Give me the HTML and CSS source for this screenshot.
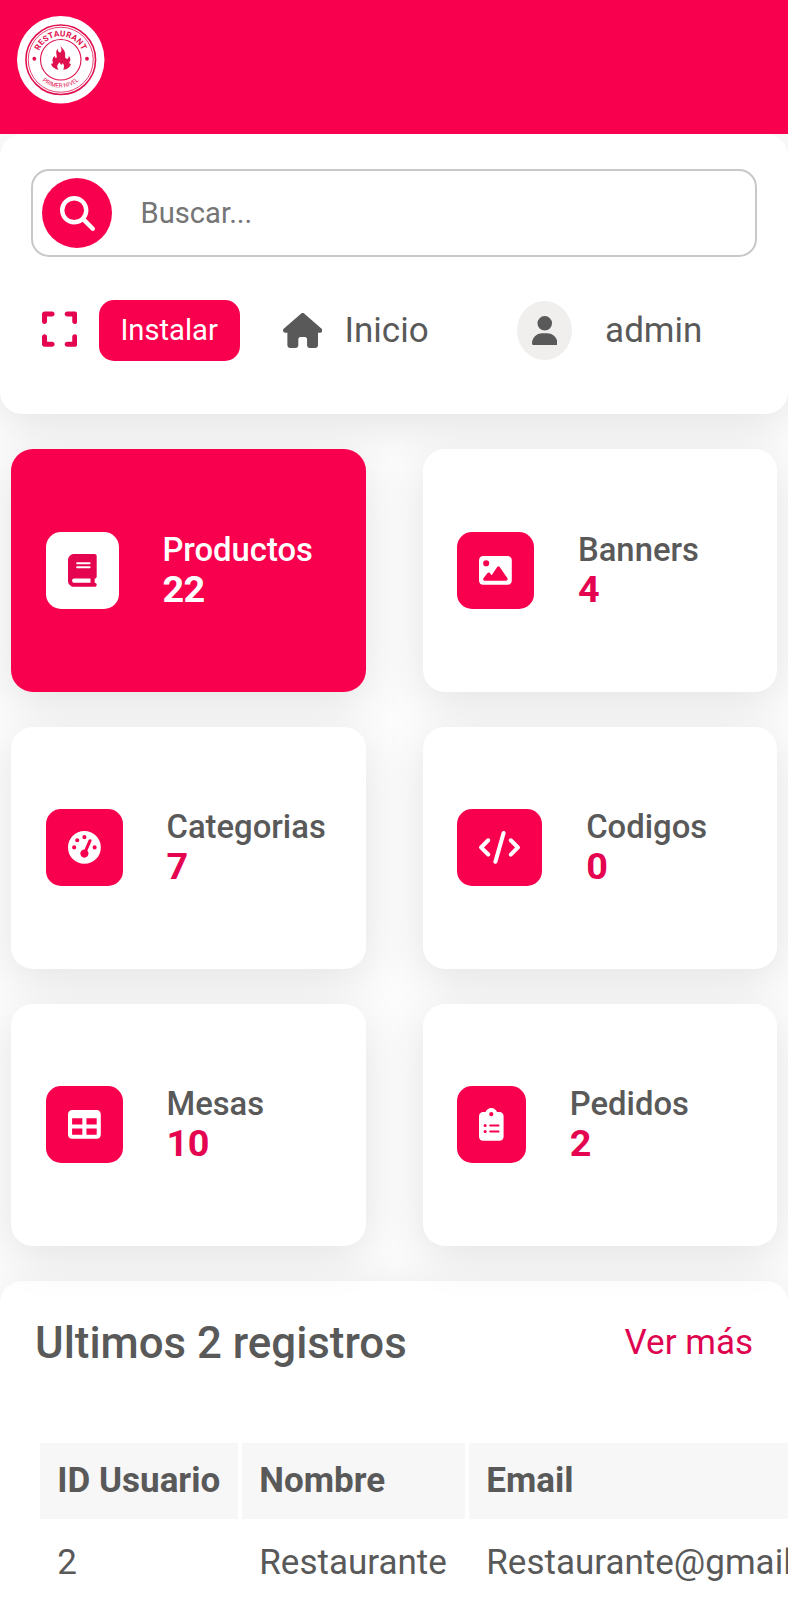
FILE: index.html
```html
<!DOCTYPE html>
<html lang="es">
<head>
<meta charset="utf-8">
<title>Restaurant</title>
<link rel="stylesheet" href="styles.css">
</head>
<body>
<header class="header">
  <svg class="logo" viewBox="0 0 88 88">
    <defs>
      <path id="arc-top" d="M20.5 44a23.5 23.5 0 0 1 47 0"/>
      <path id="arc-bottom" d="M16 44a28 28 0 0 0 56 0"/>
    </defs>
    <circle cx="44" cy="44" r="44" fill="#fff"/>
    <g fill="none" stroke="#e0104f">
      <circle cx="44" cy="44" r="35" stroke-width="1.6"/>
      <circle cx="44" cy="44" r="32.700" stroke-width=".8"/>
      <circle cx="44" cy="44" r="20.3" stroke-width="1.1"/>
    </g>
    <g fill="#e0104f">
      <circle cx="17.4" cy="43" r="1.9"/>
      <circle cx="70.4" cy="43" r="1.9"/>
      <path d="M43.500 30.500c3.600 3 5.600 6 4.900 9.600c-.3 1.600.4 2.900 1.600 3c1.700 0 2.200-1.600 1.900-3.200c2.500 2.600 1.900 4.700.8 6.700c-.5 1.300.6 1.900 1.500 1.300c0 2.800-3.600 5.800-7.800 6.100c1.400-2.200 1.200-5-.5-6.700c-.4 2.700-2.900 1.900-2.600-.8c-3 2-3.800 5.100-1.300 7.600c-4.100-.5-7.400-3.300-7.800-6.300c1.400.7 2.400-.2 1.800-1.700c-.9-2.100-.1-4.100 1.900-6c0 2.200 2 2.900 2.100.9c0-2.800-1.600-4.800.8-8.100c.2 2.800 2 4.800 3.300 3.300c1-1.300.9-3.200-.6-5.700z"/>
      <text class="logo-top"><textPath href="#arc-top" startOffset="50%" text-anchor="middle">RESTAURANT</textPath></text>
      <text class="logo-bottom"><textPath href="#arc-bottom" startOffset="50%" text-anchor="middle">PRIMER NIVEL</textPath></text>
    </g>
  </svg>
</header>

<section class="topbar">
  <div class="search">
    <span class="search-btn"><svg width="35" height="35" viewBox="0 0 512 512"><path d="M416 208c0 45.900-14.900 88.300-40 122.700L502.600 457.400c12.500 12.500 12.500 32.800 0 45.300s-32.800 12.500-45.300 0L330.700 376c-34.400 25.200-76.800 40-122.700 40C93.100 416 0 322.900 0 208S93.100 0 208 0S416 93.100 416 208zM208 352a144 144 0 1 0 0-288 144 144 0 1 0 0 288z"/></svg></span>
    <input class="search-input" type="text" placeholder="Buscar...">
  </div>
  <nav class="nav">
    <svg class="expand" viewBox="0 0 448 512"><path d="M32 32C14.300 32 0 46.300 0 64v96c0 17.700 14.300 32 32 32s32-14.300 32-32V96h64c17.700 0 32-14.300 32-32s-14.300-32-32-32H32zM64 352c0-17.700-14.300-32-32-32s-32 14.300-32 32v96c0 17.700 14.300 32 32 32h96c17.700 0 32-14.300 32-32s-14.300-32-32-32H64V352zM320 32c-17.700 0-32 14.300-32 32s14.300 32 32 32h64v64c0 17.700 14.300 32 32 32s32-14.300 32-32V64c0-17.700-14.300-32-32-32H320zM448 352c0-17.700-14.300-32-32-32s-32 14.300-32 32v64H320c-17.700 0-32 14.300-32 32s14.300 32 32 32h96c17.700 0 32-14.300 32-32V352z"/></svg>
    <button class="install">Instalar</button>
    <a class="home"><svg width="39.4" height="35" viewBox="0 0 576 512"><path d="M575.8 255.500c0 18-15 32.100-32 32.100h-32l.7 160.200c0 2.700-.2 5.400-.5 8.100V472c0 22.100-17.900 40-40 40H456c-1.100 0-2.200 0-3.300-.1c-1.400 .1-2.800 .1-4.200 .1H416 392c-22.100 0-40-17.900-40-40V448 384c0-17.700-14.300-32-32-32H256c-17.700 0-32 14.300-32 32v64 24c0 22.100-17.900 40-40 40H160 128.100c-1.500 0-3-.1-4.500-.2c-1.200 .1-2.400 .2-3.600 .2H104c-22.100 0-40-17.900-40-40V360c0-.9 0-1.900 .1-2.800V287.600H32c-18 0-32-14-32-32.100c0-9 3-17 10-24L266.400 8c7-7 15-8 22-8s15 2 21 7L564.800 231.500c8 7 12 15 11 24z"/></svg><span>Inicio</span></a>
    <span class="avatar"><svg width="25.500" height="29.200" viewBox="0 0 448 512"><path d="M224 256A128 128 0 1 0 224 0a128 128 0 1 0 0 256zm-45.700 48C79.800 304 0 383.800 0 482.300C0 498.700 13.300 512 29.700 512H418.300c16.400 0 29.700-13.300 29.700-29.700C448 383.800 368.200 304 269.700 304H178.300z"/></svg></span>
    <span class="user">admin</span>
  </nav>
</section>

<main class="cards">
  <article class="card card-active">
    <span class="card-icon"><svg width="28.700" height="32.800" viewBox="0 0 448 512"><path d="M96 0C43 0 0 43 0 96V416c0 53 43 96 96 96H384h32c17.700 0 32-14.300 32-32s-14.300-32-32-32V384c17.700 0 32-14.300 32-32V32c0-17.700-14.300-32-32-32H384 96zm0 384H352v64H96c-17.700 0-32-14.300-32-32s14.300-32 32-32zm32-240c0-8.800 7.200-16 16-16H336c8.800 0 16 7.200 16 16s-7.200 16-16 16H144c-8.800 0-16-7.200-16-16zm16 48H336c8.800 0 16 7.200 16 16s-7.200 16-16 16H144c-8.800 0-16-7.200-16-16s7.200-16 16-16z"/></svg></span>
    <div><h3 class="card-name">Productos</h3><p class="card-num">22</p></div>
  </article>
  <article class="card">
    <span class="card-icon"><svg width="32.800" height="32.800" viewBox="0 0 512 512"><path d="M0 96C0 60.700 28.700 32 64 32H448c35.300 0 64 28.700 64 64V416c0 35.300-28.700 64-64 64H64c-35.300 0-64-28.700-64-64V96zM323.800 202.500c-4.500-6.600-11.900-10.500-19.800-10.500s-15.400 3.900-19.800 10.500l-87 127.600L170.700 297c-4.600-5.700-11.500-9-18.700-9s-14.200 3.300-18.700 9l-64 80c-5.800 7.200-6.900 17.100-2.900 25.400s12.400 13.600 21.600 13.600h96 32H424c8.900 0 17.100-4.900 21.200-12.800s3.600-17.400-1.400-24.700l-120-176zM112 192a48 48 0 1 0 0-96 48 48 0 1 0 0 96z"/></svg></span>
    <div><h3 class="card-name">Banners</h3><p class="card-num">4</p></div>
  </article>
  <article class="card">
    <span class="card-icon"><svg width="32.800" height="32.800" viewBox="0 0 512 512"><path d="M0 256a256 256 0 1 1 512 0A256 256 0 1 1 0 256zM288 96a32 32 0 1 0 -64 0 32 32 0 1 0 64 0zM256 416c35.300 0 64-28.700 64-64c0-17.400-6.900-33.100-18.100-44.600L366 161.700c5.300-12.100-.2-26.300-12.300-31.600s-26.300 .2-31.600 12.300L257.900 288c-.6 0-1.300 0-1.900 0c-35.300 0-64 28.700-64 64s28.700 64 64 64zM176 144a32 32 0 1 0 -64 0 32 32 0 1 0 64 0zM96 288a32 32 0 1 0 0-64 32 32 0 1 0 0 64zm352-32a32 32 0 1 0 -64 0 32 32 0 1 0 64 0z"/></svg></span>
    <div><h3 class="card-name">Categorias</h3><p class="card-num">7</p></div>
  </article>
  <article class="card">
    <span class="card-icon"><svg width="41" height="32.800" viewBox="0 0 640 512"><path d="M392.800 1.200c-17-4.900-34.700 5-39.600 22l-128 448c-4.900 17 5 34.700 22 39.600s34.700-5 39.600-22l128-448c4.900-17-5-34.700-22-39.600zm80.600 120.100c-12.500 12.500-12.500 32.800 0 45.300L562.700 256l-89.400 89.400c-12.500 12.500-12.500 32.800 0 45.300s32.800 12.500 45.300 0l112-112c12.500-12.500 12.500-32.800 0-45.300l-112-112c-12.500-12.500-32.800-12.500-45.300 0zm-306.700 0c-12.500-12.500-32.800-12.500-45.300 0l-112 112c-12.500 12.500-12.500 32.800 0 45.300l112 112c12.500 12.500 32.800 12.500 45.300 0s12.500-32.800 0-45.300L77.300 256l89.400-89.400c12.500-12.500 12.500-32.800 0-45.300z"/></svg></span>
    <div><h3 class="card-name">Codigos</h3><p class="card-num">0</p></div>
  </article>
  <article class="card">
    <span class="card-icon"><svg width="32.800" height="32.800" viewBox="0 0 512 512"><path d="M64 256V160H224v96H64zm0 64H224v96H64V320zm224 96V320H448v96H288zM448 256H288V160H448v96zM64 32C28.700 32 0 60.700 0 96V416c0 35.300 28.700 64 64 64H448c35.300 0 64-28.700 64-64V96c0-35.300-28.700-64-64-64H64z" fill-rule="evenodd"/></svg></span>
    <div><h3 class="card-name">Mesas</h3><p class="card-num">10</p></div>
  </article>
  <article class="card">
    <span class="card-icon"><svg width="24.600" height="32.800" viewBox="0 0 384 512"><path fill-rule="evenodd" d="M192 0c-41.800 0-77.400 26.700-90.500 64H64C28.700 64 0 92.700 0 128V448c0 35.300 28.700 64 64 64H320c35.300 0 64-28.700 64-64V128c0-35.300-28.700-64-64-64H282.500C269.400 26.700 233.800 0 192 0zm0 64a32 32 0 1 1 0 64 32 32 0 1 1 0-64zM72 272a24 24 0 1 1 48 0 24 24 0 1 1 -48 0zm104-16H304c8.800 0 16 7.200 16 16s-7.200 16-16 16H176c-8.800 0-16-7.200-16-16s7.200-16 16-16zM72 368a24 24 0 1 1 48 0 24 24 0 1 1 -48 0zm88 0c0-8.800 7.200-16 16-16H304c8.800 0 16 7.200 16 16s-7.200 16-16 16H176c-8.800 0-16-7.200-16-16z"/></svg></span>
    <div><h3 class="card-name">Pedidos</h3><p class="card-num">2</p></div>
  </article>
</main>

<section class="records">
  <div class="records-head">
    <h2 class="records-title">Ultimos 2 registros</h2>
    <a class="more">Ver más</a>
  </div>
  <table class="table">
    <thead><tr><th class="col-id">ID Usuario</th><th class="col-name">Nombre</th><th class="col-mail">Email</th></tr></thead>
    <tbody><tr><td>2</td><td>Restaurante</td><td>Restaurante@gmail.com</td></tr></tbody>
  </table>
</section>
</body>
</html>
```
FILE: styles.css
```css
* { box-sizing: border-box; margin: 0; padding: 0; }

html, body { height: 1600px; overflow: hidden; }

body {
  background: #fcfcfc;
  color: #595959;
  font-family: Roboto, "Liberation Sans", sans-serif;
  font-size: 35px;
}

svg { display: block; flex: none; fill: currentColor; }

.header { height: 134.4px; padding: 16px 17px; background: #f9004e; }
.logo { width: 87.5px; height: 87.5px; }
.logo-top { font-size: 8.2px; font-weight: 700; letter-spacing: .3px; }
.logo-bottom { font-size: 6px; letter-spacing: .1px; }

.topbar,
.card,
.records {
  border-radius: 22px;
  background: #fff;
  box-shadow: 0 11px 46px rgba(0, 0, 0, .1);
}

/* keeps the panel's shadow off the header */
.header { position: relative; z-index: 1; }

.topbar { height: 280.1px; padding: 34.8px 31.5px 0 31px; }

.search {
  display: flex;
  align-items: center;
  height: 88px;
  padding-left: 9px;
  border: 2px solid #c8c8c8;
  border-radius: 18px;
}
.search-btn {
  display: grid;
  place-items: center;
  flex: none;
  width: 70px;
  height: 70px;
  border-radius: 50%;
  background: #f9004e;
  color: #fff;
}
.search-input {
  flex: 1;
  min-width: 0;
  margin-left: 28.5px;
  border: 0;
  outline: 0;
  background: none;
  font: 400 29.2px Roboto, sans-serif;
}
.search-input::placeholder { color: #757575; }

.nav { display: flex; align-items: center; height: 61px; margin: 42.5px 0 0 11px; }
.expand { width: 35.3px; height: 40.3px; margin-top: -2px; color: #e4044f; }
.install {
  height: 61px;
  width: 141px;
  margin-left: 21.3px;
  border: 0;
  border-radius: 15px;
  background: #f9004e;
  color: #fff;
  font: 400 29.2px Roboto, sans-serif;
}
.home { display: flex; align-items: center; gap: 22px; width: 234px; margin-left: 43.5px; }
.avatar {
  display: grid;
  place-items: center;
  width: 55px;
  height: 59px;
  border-radius: 50%;
  background: #f1eeee;
}
.user { margin-left: 33px; }

.cards {
  display: grid;
  grid-template-columns: 1fr 1fr;
  grid-auto-rows: 242.3px;
  gap: 34.8px 57px;
  padding: 35px 11px 35px;
}
.card { display: flex; align-items: center; gap: 43.8px; padding: 0 34.9px; }
.card > div { margin-top: -1px; }
.card-icon {
  display: grid;
  padding: 22px;
  border-radius: 15px;
  background: #f9004e;
  color: #fff;
}
.card-name { font-size: 32.8px; font-weight: 500; line-height: 38px; }
.card-num { color: #e4044f; font-size: 37.8px; font-weight: 700; line-height: 41px; letter-spacing: -.5px; }
.card-active { background: #f9004e; color: #fff; }
.card-active .card-icon { background: #fff; color: #e4044f; }
.card-active .card-num { color: #fff; }

.records { height: 400px; padding: 36px 35px 0; overflow: hidden; }
.records-head { display: flex; align-items: center; justify-content: space-between; height: 52px; }
.records-title { font-size: 43.8px; font-weight: 500; }
.more { color: #de044f; }

.table {
  width: 900px;
  margin: 70px 0 0 .8px;
  border-collapse: separate;
  border-spacing: 4.4px;
  table-layout: fixed;
}
.table th, .table td { padding: 17.5px; text-align: left; line-height: 41.5px; white-space: nowrap; }
.table td { padding-top: 18.2px; }
.table th { background: #f7f7f7; font-weight: 700; }
.col-id { width: 198px; }
.col-name { width: 223px; }
```
